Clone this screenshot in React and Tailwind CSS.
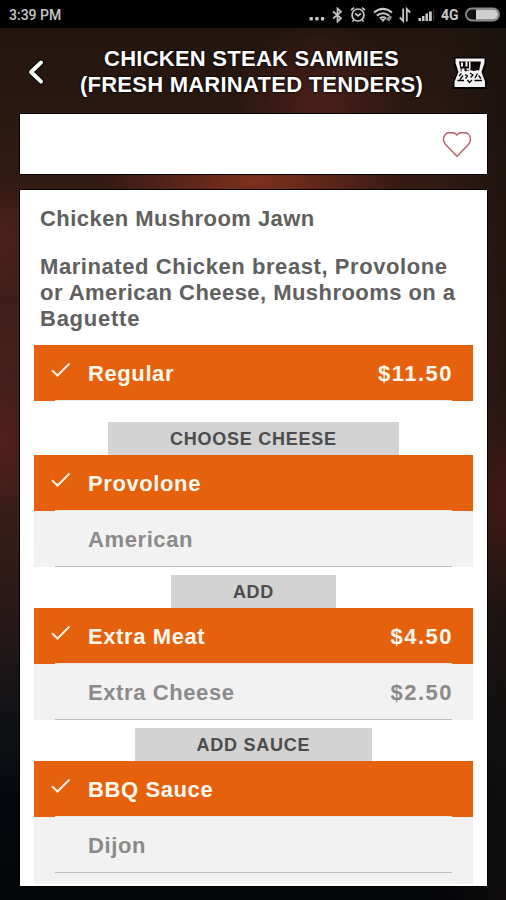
import React, { useState } from "react";

const sections = [
  {
    title: null,
    items: [{ name: "Regular", price: "$11.50" }],
  },
  {
    title: "CHOOSE CHEESE",
    tab: "w-[291px]",
    gap: "pt-[21px]",
    items: [{ name: "Provolone" }, { name: "American" }],
  },
  {
    title: "ADD",
    tab: "w-[165px]",
    gap: "pt-[8px]",
    items: [
      { name: "Extra Meat", price: "$4.50" },
      { name: "Extra Cheese", price: "$2.50" },
    ],
  },
  {
    title: "ADD SAUCE",
    tab: "w-[237px]",
    gap: "pt-[8px]",
    items: [{ name: "BBQ Sauce" }, { name: "Dijon" }],
  },
];

function StatusBar() {
  return (
    <div className="flex h-[28px] shrink-0 items-center justify-between bg-black pl-[9px] pr-[6px] pt-px text-[#c8c8c8]">
      <span className="font-[Roboto] text-[14px] font-medium leading-[28px]">
        3:39 PM
      </span>
      <div className="flex items-center">
        <svg className="mr-[7px] h-[20px] w-[16px]" viewBox="0 0 16 20" fill="currentColor">
          <rect x="0.5" y="12" width="3.4" height="3.4" rx="1" />
          <rect x="6.2" y="12" width="3.4" height="3.4" rx="1" />
          <rect x="11.9" y="12" width="3.4" height="3.4" rx="1" />
        </svg>
        <svg className="mr-[7px] h-[16px] w-[11px]" viewBox="0 0 11 16" fill="none" stroke="currentColor" strokeWidth="1.7">
          <path d="M1 4.5 9 11.2 5.5 14.5V1.5L9 4.8 1 11.5" />
        </svg>
        <svg className="mr-[7px] h-[17px] w-[16px]" viewBox="0 0 16 17" fill="none" stroke="currentColor" strokeWidth="1.7">
          <circle cx="8" cy="9" r="6" />
          <path d="M1 4.2 4 1.7M15 4.2 12 1.7M5.2 7.5 8 9.8 10.8 7.5M3.8 14 2.5 15.5M12.2 14l1.3 1.5" />
        </svg>
        <svg className="mr-[6px] h-[16px] w-[20px]" viewBox="0 0 20 16" fill="none" stroke="currentColor" strokeWidth="2">
          <path d="M1 5.5Q10-1.8 19 5.5M3.8 8.6q6.2-4.8 12.4 0M6.8 11.4q3.2-2.4 6.4 0" />
          <path d="M7.5 12h5L10 15z" fill="currentColor" stroke="none" />
          <path d="M13.5 13l4-4M15.5 14l3-4.5" stroke="#888" strokeWidth="1.8" />
        </svg>
        <svg className="mr-[7px] h-[16px] w-[12px]" viewBox="0 0 12 16" fill="none" stroke="currentColor" strokeWidth="1.8">
          <path d="M4.2 1.5V14L0.8 10.5M7.8 14.5V2l3.4 3.5" />
        </svg>
        <svg className="mr-[6px] h-[14px] w-[17px]" viewBox="0 0 17 14" fill="currentColor">
          <rect x="0.5" y="10" width="2.5" height="3" />
          <rect x="4" y="8" width="2.5" height="5" />
          <rect x="7.5" y="5.5" width="2.5" height="7.5" />
          <rect x="11" y="3.5" width="2.8" height="9.5" />
          <rect x="15" y="1" width="1.2" height="12" fill="#333" />
        </svg>
        <span className="mr-[6px] w-[18px] whitespace-nowrap font-[Roboto] text-[14px] font-bold leading-[28px]">
          4G
        </span>
        <svg className="h-[15px] w-[35px]" viewBox="0 0 35 15">
          <rect x="1" y="1.5" width="33" height="12" rx="6" fill="#111" stroke="#8c8c8c" strokeWidth="1.8" />
          <path d="M11 2.5h17a5 5 0 0 1 0 10H11z" fill="#cfcfcf" />
        </svg>
      </div>
    </div>
  );
}

function ChestIcon() {
  return (
    <svg className="h-[36px] w-[36px]" viewBox="0 0 36 36">
      <path d="M2 2h32v9l-3 7 4 8v8H1v-8l4-8-3-7z" fill="#000" />
      <path d="M3.5 3.5h29V8l-3 9 3.500 9.500v5.500H2.500v-5.500L6.500 17l-3-9z" fill="#f2f2f2" />
      <path d="M7 6.500h22l-2 9.500-18 1z" fill="#0a0605" />
      <path d="M9 7.500h2v4H9zM13.500 6.500h2v5h-2zM17 6.500h1.500v8l-4 1v-2h2.500zM9.500 13.500h3v2.500h-3z" fill="#f2f2f2" />
      <path d="M7.500 17.500 11 15.500l3 1 4-1.500 4 1 4-1 2.500 2.500v3h-21z" fill="#f2f2f2" />
      <path
        d="M7 21 9.500 18.500M8 24.500l3-4M13 19.500l2.500 1.500-2 2.500M18 18l3 2-2.500 2.500M23 23l2.500-4.500M26.500 20.500l2.500 3M5.500 25.500H12M22.500 25.500h7.500M15.500 25l2 2.500 2.500-2.500"
        fill="none"
        stroke="#0a0605"
        strokeWidth="1.3"
      />
    </svg>
  );
}

function Header() {
  return (
    <div className="flex h-[86px] shrink-0 items-start pl-[27px] pr-[18px]">
      <button type="button" className="mt-[30px] h-[28px] w-[18px]">
        <svg className="h-[28px] w-[18px]" viewBox="0 0 18 28" fill="none" strokeLinecap="round" strokeLinejoin="round">
          <path d="M14 4.5 4 14l10 9.5" stroke="#000" strokeWidth="6" />
          <path d="M14 4.5 4 14l10 9.5" stroke="#fff" strokeWidth="4" />
        </svg>
      </button>
      <h1 className="mt-[18px] flex-1 whitespace-nowrap pl-[6px] text-center text-[22px] font-bold leading-[26px] tracking-[0.25px] text-white [text-shadow:0_0_2px_#000,0_0_2px_#000]">
        CHICKEN STEAK SAMMIES
        <br />
        (FRESH MARINATED TENDERS)
      </h1>
      <button type="button" className="mt-[27px]">
        <ChestIcon />
      </button>
    </div>
  );
}

function OptionRow({ item, selected, onSelect }) {
  return (
    <button
      type="button"
      onClick={onSelect}
      className={`block h-[56px] w-full pl-[21px] pr-[21px] text-left font-bold ${
        selected ? "bg-[#e5610d] text-[#fff8ee]" : "bg-[#f2f2f2] text-[#8a8a8a]"
      }`}
    >
      <span
        className={`flex h-[56px] items-center border-b pt-[2px] ${
          selected ? "border-[#f1e6de]" : "border-[#bdbdbd]"
        }`}
      >
        <span className="w-[33px]">
          {selected && (
            <svg className="-ml-[4px] -mt-[7px] h-[16px] w-[20px]" viewBox="0 0 20 16" fill="none" stroke="#fff3dc" strokeWidth="2">
              <path d="M1 8.2 6.5 13.5 18.5 1.5" />
            </svg>
          )}
        </span>
        <span className="flex-1 text-[22px] tracking-[0.6px]">{item.name}</span>
        <span className="-mr-px text-[22px] tracking-[1.5px]">{item.price}</span>
      </span>
    </button>
  );
}

function Section({ section }) {
  const [picked, setPicked] = useState(0);

  return (
    <div className={section.gap}>
      {section.title && (
        <div
          className={`mx-auto h-[33px] bg-[#d3d3d3] text-center text-[18px] font-bold leading-[34px] tracking-[0.75px] text-[#4c4c4c] ${section.tab}`}
        >
          {section.title}
        </div>
      )}
      {section.items.map((item, i) => (
        <OptionRow
          key={item.name}
          item={item}
          selected={picked === i}
          onSelect={() => setPicked(i)}
        />
      ))}
    </div>
  );
}

export default function App() {
  return (
    <div className="flex h-[900px] w-[506px] flex-col overflow-hidden bg-[radial-gradient(ellipse_150px_70px_at_255px_182px,#80301f,transparent),radial-gradient(ellipse_90px_80px_at_320px_105px,#4a2019,transparent),radial-gradient(ellipse_50px_60px_at_0px_240px,#4c2219,transparent),radial-gradient(ellipse_40px_70px_at_0px_440px,#521f1b,transparent),radial-gradient(ellipse_60px_110px_at_506px_500px,#401a15,transparent),linear-gradient(90deg,transparent_440px,#140f0ca0_506px),linear-gradient(180deg,#21150d_0px,#2a1811_110px,#351b13_200px,#42201a_350px,#3b1e17_500px,#281818_620px,#101216_720px,#05090d_800px,#05060a_900px)] font-['Liberation_Sans',Arial,sans-serif]">
      <StatusBar />
      <Header />
      <div className="ml-[20px] flex h-[60px] w-[467px] shrink-0 items-center justify-end bg-white pr-[15px] outline outline-1 outline-black">
        <svg className="h-[28px] w-[30px]" viewBox="0 0 30 28" fill="none" stroke="#b85c66" strokeWidth="1.4">
          <path d="M15 5C14 3.8 12.5 2.8 10.5 2.8H7C3.5 2.8 1.5 6 1.5 9.5c0 2.5 1.5 4.5 4 7L15 26.2l9.5-9.7c2.5-2.5 4-4.5 4-7 0-3.5-2-6.7-5.5-6.7h-3.5C17.5 2.8 16 3.8 15 5z" />
        </svg>
      </div>
      <div className="ml-[20px] mt-[16px] h-[696px] w-[467px] shrink-0 bg-white pl-[14px] outline outline-1 outline-black">
        <div className="ml-[6px] h-[155px] pt-[16px] text-[22px] font-bold leading-[26px] tracking-[0.45px] text-[#606060]">
          <div>Chicken Mushroom Jawn</div>
          <p className="mt-[22px] whitespace-nowrap">
            <span className="tracking-[0.57px]">Marinated Chicken breast, Provolone</span>
            <br />
            or American Cheese, Mushrooms on a
            <br />
            <span className="tracking-[0.75px]">Baguette</span>
          </p>
        </div>
        <div className="w-[439px]">
          {sections.map((section, i) => (
            <Section key={i} section={section} />
          ))}
          <div className="h-[11px] bg-[#f2f2f2]" />
        </div>
      </div>
    </div>
  );
}
